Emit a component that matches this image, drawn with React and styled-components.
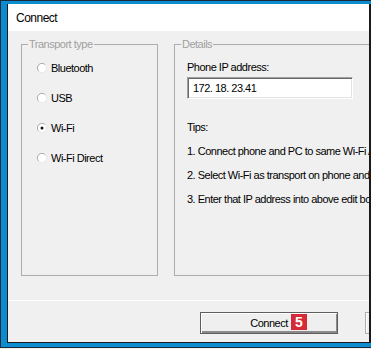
import React from "react";
import styled, { createGlobalStyle } from "styled-components";

const Global = createGlobalStyle`
  html, body { margin: 0; padding: 0; background: #f0f0f0; }
  body {
    font-family: "Liberation Sans", Arial, sans-serif;
    font-size: 11px;
    letter-spacing: -0.5px;
    color: #000;
  }
`;

const Frame = styled.div`
  box-sizing: border-box;
  width: 371px;
  height: 348px;
  display: flex;
  background: #0b8bd0;
  border-top: 1px solid #1b2a38;
  border-left: 1px solid #1b2a38;
  border-bottom: 1px solid #1b2a38;
  padding: 3px 0 4px 6px;
`;

const Window = styled.div`
  flex: 1;
  min-width: 0;
  display: flex;
  flex-direction: column;
  background: #f0f0f0;
  border-left: 1px solid #1a1a1a;
  border-bottom: 1px solid #1a1a1a;
  border-right: 2px solid #1a1a1a;
  overflow: hidden;
`;

const TitleBar = styled.div`
  height: 27px;
  flex: none;
  display: flex;
  align-items: center;
  padding-left: 8px;
  background: #ffffff;
  font-size: 12px;
`;

const Body = styled.div`
  flex: 1;
  display: flex;
  flex-direction: column;
`;

const GroupRow = styled.div`
  display: flex;
  gap: 16px;
  height: 238px;
  margin: 7px 0 0 13px;
`;

const Group = styled.fieldset`
  box-sizing: border-box;
  margin: 0;
  padding: 0;
  min-width: 0;
  flex: none;
  width: ${p => p.$width}px;
  border: 1px solid #adadad;
`;

const Legend = styled.legend`
  margin-left: 6px;
  padding: 0 1px;
  line-height: 13px;
  color: #a0a0a0;
`;

const RadioList = styled.div`
  display: flex;
  flex-direction: column;
  padding: 2px 0 0 15px;
`;

const RadioRow = styled.label`
  height: 30px;
  display: flex;
  align-items: center;
  gap: 4px;
`;

const Field = styled.div`
  display: flex;
  flex-direction: column;
  padding: 10px 0 0 12px;
`;

const Caption = styled.div`
  line-height: 13px;
  white-space: nowrap;
`;

const IpInput = styled.div`
  box-sizing: border-box;
  width: 166px;
  height: 22px;
  margin-top: 3px;
  display: flex;
  align-items: center;
  padding-left: 5px;
  background: #fff;
  border-top: 1px solid #a0a0a0;
  border-left: 1px solid #a0a0a0;
  border-right: 1px solid #fff;
  border-bottom: 1px solid #fff;
  box-shadow: inset 1px 1px 0 #696969, inset -1px -1px 0 #e3e3e3;
`;

const Tips = styled.div`
  display: flex;
  flex-direction: column;
  gap: 11px;
  margin-top: 22px;
`;

const Divider = styled.div`
  height: 1px;
  margin-top: 24px;
  background: #ffffff;
`;

const ButtonRow = styled.div`
  display: flex;
  gap: 27px;
  padding: 11px 0 0 192px;
`;

const Button = styled.div`
  position: relative;
  box-sizing: border-box;
  flex: none;
  width: 138px;
  height: 22px;
  display: flex;
  align-items: center;
  justify-content: center;
  background: #efefef;
  border: 1px solid ${p => (p.$default ? "#5e5e5e" : "#adadad")};
  box-shadow: ${p =>
    p.$default
      ? "inset 1px 1px 0 #ffffff, inset -1px -1px 0 #8a8a8a, inset 0 -2px 0 #8a8a8a"
      : "inset 1px 1px 0 #ffffff"};
`;

const Badge = styled.span`
  position: absolute;
  left: 90px;
  top: 1px;
  width: 16px;
  height: 16px;
  display: flex;
  align-items: center;
  justify-content: center;
  background: #d42b37;
  color: #fff;
  font-weight: bold;
  font-size: 14px;
  letter-spacing: 0;
`;

function Radio({ checked }) {
  return (
    <svg width="10" height="10" viewBox="0 0 12 12">
      <circle cx="6" cy="6" r="5.5" fill="#ffffff" />
      <path d="M2.1 9.9 A5.5 5.5 0 0 1 9.9 2.1" stroke="#9a9a9a" strokeWidth="1" fill="none" />
      <path d="M2.1 9.9 A5.5 5.5 0 0 0 9.9 2.1" stroke="#e6e6e6" strokeWidth="1" fill="none" />
      {checked && <circle cx="6" cy="6" r="1.8" fill="#111" />}
    </svg>
  );
}

const transports = [
  { name: "Bluetooth" },
  { name: "USB" },
  { name: "Wi-Fi", checked: true },
  { name: "Wi-Fi Direct" },
];

const tips = [
  "1. Connect phone and PC to same Wi-Fi AP",
  "2. Select Wi-Fi as transport on phone and tap Start",
  "3. Enter that IP address into above edit box",
];

export default function App() {
  return (
    <>
      <Global />
      <Frame>
        <Window>
          <TitleBar>Connect</TitleBar>
          <Body>
            <GroupRow>
              <Group $width={137}>
                <Legend>Transport type</Legend>
                <RadioList>
                  {transports.map(t => (
                    <RadioRow key={t.name}>
                      <Radio checked={t.checked} />
                      {t.name}
                    </RadioRow>
                  ))}
                </RadioList>
              </Group>
              <Group $width={260}>
                <Legend>Details</Legend>
                <Field>
                  <Caption>Phone IP address:</Caption>
                  <IpInput>172. 18. 23.41</IpInput>
                  <Tips>
                    <Caption>Tips:</Caption>
                    {tips.map(t => (
                      <Caption key={t}>{t}</Caption>
                    ))}
                  </Tips>
                </Field>
              </Group>
            </GroupRow>
            <Divider />
            <ButtonRow>
              <Button $default>
                Connect
                <Badge>5</Badge>
              </Button>
              <Button>Cancel</Button>
            </ButtonRow>
          </Body>
        </Window>
      </Frame>
    </>
  );
}
